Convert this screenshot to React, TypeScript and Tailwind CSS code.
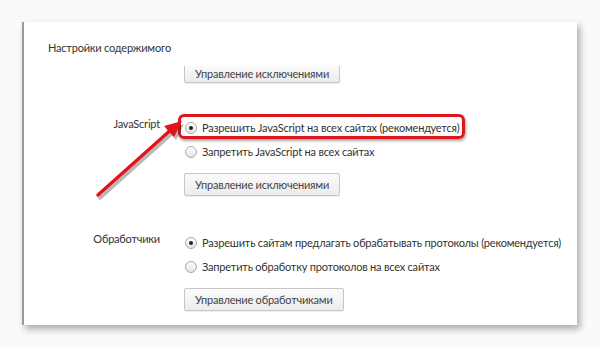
import React from 'react'

const font = { fontFamily: 'Lato, "Noto Sans", Arial, sans-serif', letterSpacing: '-0.2px' }

function Radio({ checked }: { checked?: boolean }) {
  return (
    <span className="relative flex h-[12px] w-[12px] shrink-0 items-center justify-center rounded-full border border-[#a9a9a9] bg-gradient-to-b from-[#fdfdfd] to-[#e4e4e4] shadow-[inset_0_1px_1px_rgba(255,255,255,0.9)]">
      {checked && <span className="h-[4px] w-[4px] rounded-full bg-[#222]" />}
    </span>
  )
}

function Option({ checked, children }: { checked?: boolean; children: React.ReactNode }) {
  return (
    <div className="flex h-[24px] items-center gap-[5px] whitespace-nowrap pl-[1px]">
      <Radio checked={checked} />
      <span className="text-[11px] leading-[16px] text-[#333]">{children}</span>
    </div>
  )
}

function Button({ children, clipped }: { children: React.ReactNode; clipped?: boolean }) {
  return (
    <div
      className={
        'flex items-center whitespace-nowrap border border-[#c6c6c6] bg-gradient-to-b from-[#fbfbfb] to-[#ececec] px-[10px] text-[11px] leading-[16px] text-[#444] shadow-[0_1px_0_rgba(0,0,0,0.06)] ' +
        (clipped ? 'h-[17px] rounded-b-[2px] border-t-0 pb-[1px]' : 'h-[23px] rounded-[2px]')
      }
    >
      {children}
    </div>
  )
}

export default function App() {
  return (
    <div className="h-[348px] w-[600px] overflow-hidden bg-[#fafafa] pl-[22px] pt-[22px]" style={font}>
      <div className="relative h-[303px] w-[555px] border-l-2 border-[#9a9a9a] bg-white shadow-[3px_4px_7px_rgba(0,0,0,0.32)]">
        <div className="pl-[24px] pt-[18px] text-[11px] leading-[16px] text-[#333]">Настройки содержимого</div>

        <div className="ml-[160px] mt-[10px] flex">
          <Button clipped>Управление исключениями</Button>
        </div>

        <div className="mt-[33px] flex">
          <div className="w-[136px] shrink-0 text-right text-[11px] leading-[16px] text-[#333]">JavaScript</div>
          <div className="ml-[24px] flex flex-col items-start">
            <div className="relative">
              <div className="absolute -left-[6px] -top-[2px] h-[25px] w-[287px] rounded-[6px] border-[3px] border-[#e0141b] shadow-[1px_2px_3px_rgba(0,0,0,0.35)]" />
              <Option checked>Разрешить JavaScript на всех сайтах (рекомендуется)</Option>
            </div>
            <Option>Запретить JavaScript на всех сайтах</Option>
            <div className="mt-[9px] flex">
              <Button>Управление исключениями</Button>
            </div>
          </div>
        </div>

        <div className="mt-[35px] flex">
          <div className="w-[136px] shrink-0 text-right text-[11px] leading-[16px] text-[#333]">Обработчики</div>
          <div className="ml-[24px] flex flex-col items-start">
            <Option checked>Разрешить сайтам предлагать обрабатывать протоколы (рекомендуется)</Option>
            <Option>Запретить обработку протоколов на всех сайтах</Option>
            <div className="mt-[9px] flex">
              <Button>Управление обработчиками</Button>
            </div>
          </div>
        </div>

        <svg className="pointer-events-none absolute left-0 top-0" width="200" height="200" viewBox="0 0 200 200">
          <g transform="translate(2,3)" opacity="0.35">
            <line x1="74" y1="173" x2="150" y2="105" stroke="#333" strokeWidth="3.5" strokeLinecap="round" />
            <polygon points="158,99 140,104 150,115" fill="#333" />
          </g>
          <line x1="74" y1="173" x2="149" y2="106" stroke="#e0141b" strokeWidth="3.5" strokeLinecap="round" />
          <polygon points="158,99 140,104 150,115" fill="#e0141b" />
        </svg>
      </div>
    </div>
  )
}
